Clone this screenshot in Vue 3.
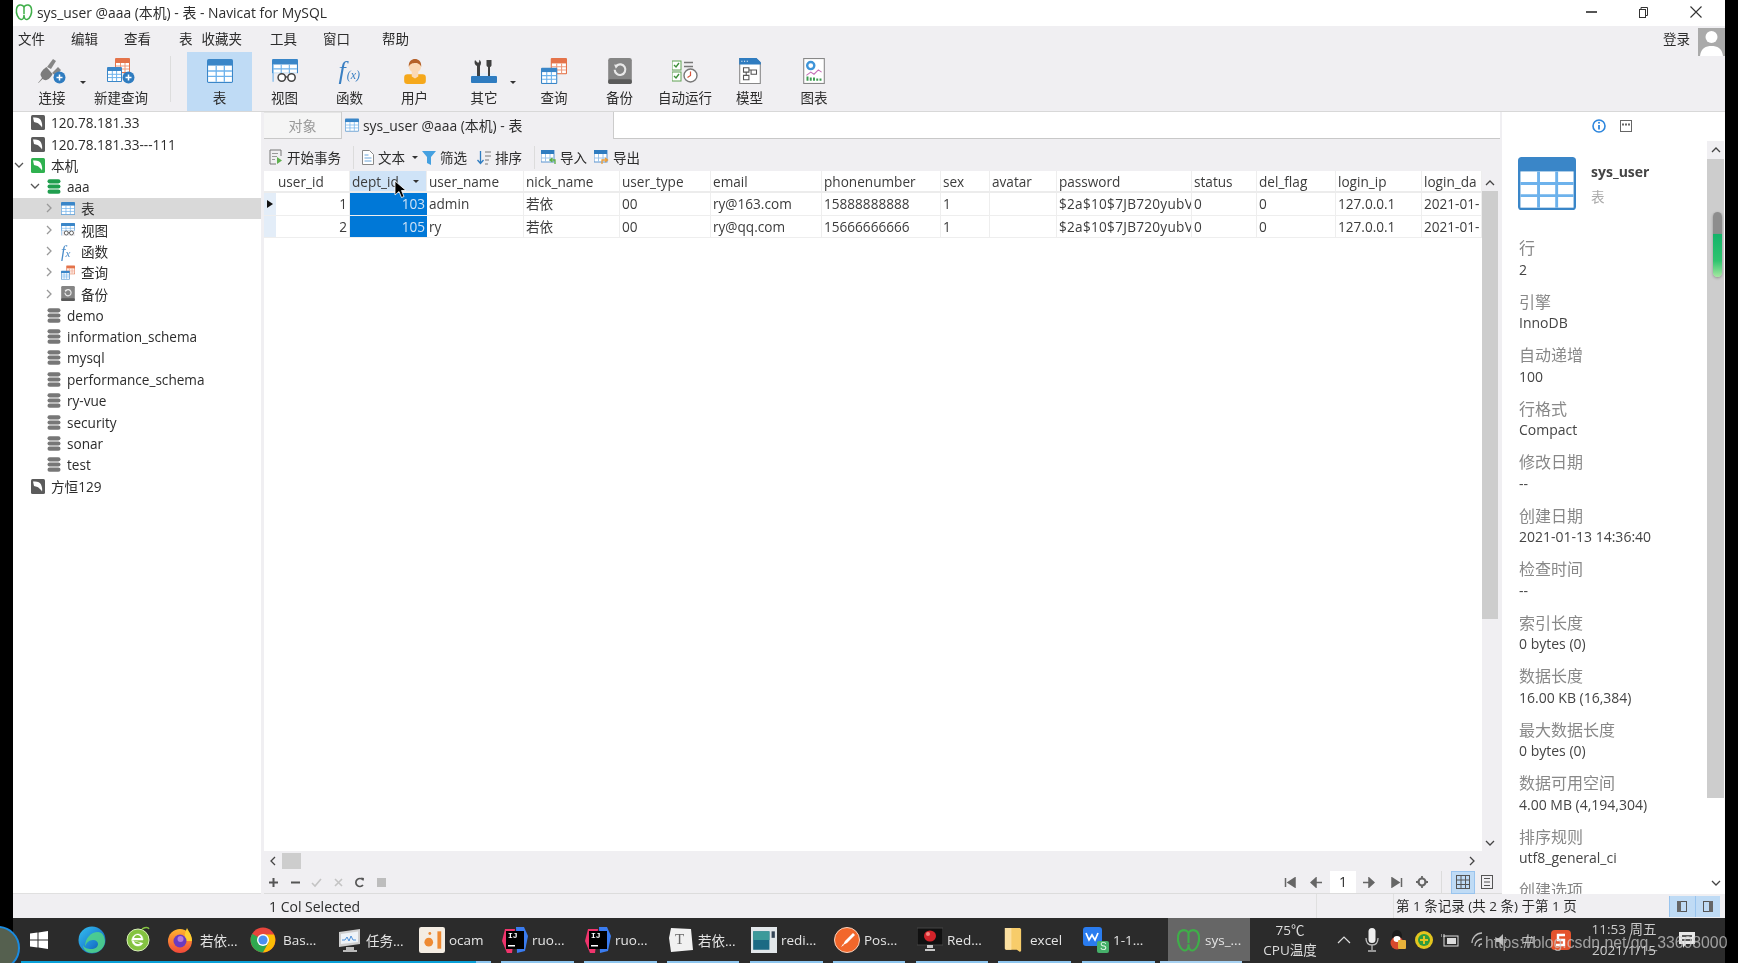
<script setup>
const menus = [
  { t: '文件', l: 18 }, { t: '编辑', l: 26 }, { t: '查看', l: 26 }, { t: '表', l: 28 }, { t: '收藏夹', l: 9 },
  { t: '工具', l: 28 }, { t: '窗口', l: 26 }, { t: '帮助', l: 32 },
]
const tools1 = [
  { t: '连接', i: 'plug', w: 78, drop: true },
  { t: '新建查询', i: 'newq', w: 60 },
]
const tools2 = [
  { t: '表', i: 'tbl', w: 65, on: true },
  { t: '视图', i: 'view', w: 65 },
  { t: '函数', i: 'func', w: 65 },
  { t: '用户', i: 'user', w: 65 },
  { t: '其它', i: 'tools', w: 74, drop: true },
  { t: '查询', i: 'query', w: 66 },
  { t: '备份', i: 'backup', w: 65 },
  { t: '自动运行', i: 'auto', w: 66 },
  { t: '模型', i: 'model', w: 63 },
  { t: '图表', i: 'chart', w: 66 },
]
const tree = [
  { t: '120.78.181.33', i: 'conn', lv: 0 },
  { t: '120.78.181.33---111', i: 'conn', lv: 0 },
  { t: '本机', i: 'conng', lv: 0, c: 'd' },
  { t: 'aaa', i: 'dbg', lv: 1, c: 'd' },
  { t: '表', i: 'tbl', lv: 2, c: 'r', sel: true },
  { t: '视图', i: 'view', lv: 2, c: 'r' },
  { t: '函数', i: 'fx', lv: 2, c: 'r' },
  { t: '查询', i: 'query', lv: 2, c: 'r' },
  { t: '备份', i: 'backup', lv: 2, c: 'r' },
  { t: 'demo', i: 'db', lv: 1 },
  { t: 'information_schema', i: 'db', lv: 1 },
  { t: 'mysql', i: 'db', lv: 1 },
  { t: 'performance_schema', i: 'db', lv: 1 },
  { t: 'ry-vue', i: 'db', lv: 1 },
  { t: 'security', i: 'db', lv: 1 },
  { t: 'sonar', i: 'db', lv: 1 },
  { t: 'test', i: 'db', lv: 1 },
  { t: '方恒129', i: 'conn', lv: 0 },
]
const cols = [
  { n: 'user_id', w: 74 }, { n: 'dept_id', w: 77 }, { n: 'user_name', w: 97 }, { n: 'nick_name', w: 96 },
  { n: 'user_type', w: 91 }, { n: 'email', w: 111 }, { n: 'phonenumber', w: 119 }, { n: 'sex', w: 49 },
  { n: 'avatar', w: 67 }, { n: 'password', w: 135 }, { n: 'status', w: 65 }, { n: 'del_flag', w: 79 },
  { n: 'login_ip', w: 86 }, { n: 'login_da', w: 60 },
]
const gridCols = '12px ' + cols.map(c => c.w + 'px').join(' ')
const rows = [
  ['1', '103', 'admin', '若依', '00', 'ry@163.com', '15888888888', '1', '', '$2a$10$7JB720yubV', '0', '0', '127.0.0.1', '2021-01-'],
  ['2', '105', 'ry', '若依', '00', 'ry@qq.com', '15666666666', '1', '', '$2a$10$7JB720yubV', '0', '0', '127.0.0.1', '2021-01-'],
]
const info = [
  ['行', '2'], ['引擎', 'InnoDB'], ['自动递增', '100'], ['行格式', 'Compact'], ['修改日期', '--'],
  ['创建日期', '2021-01-13 14:36:40'], ['检查时间', '--'], ['索引长度', '0 bytes (0)'],
  ['数据长度', '16.00 KB (16,384)'], ['最大数据长度', '0 bytes (0)'], ['数据可用空间', '4.00 MB (4,194,304)'],
  ['排序规则', 'utf8_general_ci'], ['创建选项', ''],
]
const apps = [
  { t: '若依...', i: 'firefox', s: 'f' }, { t: 'Bas...', i: 'chrome', s: 'f' }, { t: '任务...', i: 'taskmgr' }, { t: 'ocam', i: 'ocam' },
  { t: 'ruo...', i: 'idea', g: 'IJ' }, { t: 'ruo...', i: 'idea', g: 'IJ' }, { t: '若依...', i: 'typora', g: 'T' }, { t: 'redi...', i: 'redi' },
  { t: 'Pos...', i: 'postman' }, { t: 'Red...', i: 'redis' }, { t: 'excel', i: 'folder' }, { t: '1-1...', i: 'wps', g: 'S' },
]
const strip = [
  { w: 8, c: 'n' }, { w: 455, c: 'a' }, { w: 15, c: 'b' }, { w: 10, c: 'n' }, { w: 73, c: 'b' }, { w: 10, c: 'n' }, { w: 73, c: 'b' },
  { w: 10, c: 'n' }, { w: 72, c: 'b' }, { w: 11, c: 'n' }, { w: 73, c: 'b' }, { w: 10, c: 'n' }, { w: 72, c: 'b' },
  { w: 11, c: 'n' }, { w: 72, c: 'b' }, { w: 10, c: 'n' }, { w: 73, c: 'b' }, { w: 11, c: 'n' }, { w: 73, c: 'b' },
  { w: 5, c: 'n' }, { w: 82, c: 'c' },
]
</script>

<template>
  <div class="app">
    <svg class="defs" width="0" height="0">
      <defs>
        <linearGradient id="edgeg" x1="0" y1="0" x2="1" y2="1"><stop offset="0" stop-color="#35c1f1" /><stop offset=".6" stop-color="#1b7fd0" /><stop offset="1" stop-color="#114a9a" /></linearGradient>
        <linearGradient id="ffg" x1="0" y1="0" x2="0" y2="1"><stop offset="0" stop-color="#ffb52e" /><stop offset="1" stop-color="#f2483a" /></linearGradient>
      </defs>
      <symbol id="tbl" viewBox="0 0 24 22"><rect width="24" height="22" rx="1.5" fill="#3a86c8" /><rect x="1" y="6" width="22" height="15" fill="#fff" /><path d="M1 11H23M1 16H23M8.5 6V21M16 6V21" stroke="#6db2ec" stroke-width="1.2" /></symbol>
      <symbol id="view" viewBox="0 0 24 22"><rect width="24" height="16" rx="1" fill="#3a86c8" /><rect x="1" y="5" width="22" height="11" fill="#fff" /><path d="M1 9H23M1 13H23M8.5 5V16M16 5V16" stroke="#6db2ec" /><rect x="0" y="13" width="24" height="9" fill="#f0eff2" /><path d="M1 5V21" stroke="#6db2ec" /><circle cx="9" cy="17" r="3.4" fill="#fff" stroke="#444" stroke-width="1.4" /><circle cx="18" cy="17" r="3.4" fill="#fff" stroke="#444" stroke-width="1.4" /><path d="M12.4 16.5h2.2" stroke="#444" stroke-width="1.3" /></symbol>
      <symbol id="user" viewBox="0 0 24 24"><rect x="2" y="15" width="20" height="9" rx="3" fill="#f5a81c" /><path d="M9 13h6v4l-3 2-3-2z" fill="#fbd9b5" /><circle cx="12" cy="8" r="5.6" fill="#fbd9b5" /><path d="M6.2 8C6 3 9 1 12 1s6 2 5.8 7C16.5 5 14 4.5 12 4.5S7.5 5 6.2 8z" fill="#b5622a" /></symbol>
      <symbol id="tools" viewBox="0 0 26 24"><path d="M2 14h22l2 8v2H0v-2z" fill="#e4effa" /><rect y="17" width="26" height="7" rx="1" fill="#2f7cc0" /><path d="M6 17V7C3.6 6 3 3 4 1l2.4 2.5L8 3.4l.3-2.6C10.3 2 10.6 5 9 7v10z" fill="#404040" /><path d="M17 17V8c-1-.2-1.5-1-1.5-2V1h5v5c0 1-.5 1.8-1.5 2v9z" fill="#404040" /></symbol>
      <symbol id="query" viewBox="0 0 24 24"><rect x="9" y="0" width="15" height="15" rx="1" fill="#e4734a" /><rect x="10" y="5" width="13" height="9" fill="#fff" /><path d="M10 8h13M10 11h13M14.5 5v9M19 5v9" stroke="#ee9a7c" /><rect x="0" y="9" width="15" height="15" rx="1" fill="#3a86c8" /><rect x="1" y="13" width="13" height="10" fill="#fff" /><path d="M1 16.3h13M1 19.6h13M5.3 13v10M9.6 13v10" stroke="#6db2ec" /></symbol>
      <symbol id="newq" viewBox="0 0 28 26"><rect x="8" y="0" width="15" height="15" rx="1" fill="#e4734a" /><rect x="9" y="5" width="13" height="9" fill="#fff" /><path d="M9 8h13M9 11h13M13.5 5v9M18 5v9" stroke="#ee9a7c" /><rect x="0" y="9" width="15" height="15" rx="1" fill="#3a86c8" /><rect x="1" y="13" width="13" height="10" fill="#fff" /><path d="M1 16.3h13M1 19.6h13M5.3 13v10M9.6 13v10" stroke="#6db2ec" /><circle cx="21.5" cy="19.5" r="6" fill="#2f7cc0" /><path d="M18.5 19.5h6M21.5 16.5v6" stroke="#fff" stroke-width="1.5" /></symbol>
      <symbol id="plug" viewBox="0 0 28 26"><path d="M0 25l4-5-1.500-3c0-3 3-6 6-8l6 7c-1 3-5 7-8 6l-2-1-4 4z" fill="#7c7c7c" /><path d="M9 9l6-8 3 2-5 8zM14 15l6-6 3 3-5 6z" fill="#868686" /><circle cx="21.5" cy="19.5" r="6" fill="#2f7cc0" /><path d="M18.5 19.5h6M21.5 16.5v6" stroke="#fff" stroke-width="1.5" /></symbol>
      <symbol id="backup" viewBox="0 0 20 22"><rect width="20" height="22" rx="2" fill="#858585" /><rect y="18" width="20" height="4" rx="1.5" fill="#5a5a5a" /><path d="M7 6.5a4.5 4.5 0 1 1-1.5 3.5" fill="none" stroke="#e8e8e8" stroke-width="1.8" /><path d="M5 5.5l4 .5-2.5 3z" fill="#e8e8e8" /></symbol>
      <symbol id="auto" viewBox="0 0 26 24"><rect x="0" y="2" width="9" height="9" fill="#fff" stroke="#5fa253" /><path d="M2 6l2 2 3-4" fill="none" stroke="#3e8f3a" stroke-width="1.4" /><rect x="0" y="13" width="9" height="9" fill="#fff" stroke="#5fa253" /><path d="M2 17l2 2 3-4" fill="none" stroke="#3e8f3a" stroke-width="1.4" /><path d="M12 3.5h9M12 7.5h9" stroke="#777" stroke-width="1.5" /><circle cx="18.5" cy="16.5" r="6.5" fill="#fff" stroke="#777" stroke-width="1.4" /><path d="M18.5 12.5v4l-3 2" fill="none" stroke="#d8553c" stroke-width="1.2" /></symbol>
      <symbol id="model" viewBox="0 0 20 24"><path d="M.5.5h15l4 4v19H.5z" fill="#fff" stroke="#888" /><path d="M0 0h16l4 4v2H0z" fill="#2f7cc0" /><path d="M2 3h1M4.5 3h1M7 3h1" stroke="#fff" /><path d="M4 9h5v4H4zM11 11h5v4h-5zM4 16h5v4H4zM6.5 13v3M9 11h2" fill="none" stroke="#555" /></symbol>
      <symbol id="chart" viewBox="0 0 20 24"><rect x=".5" y=".5" width="19" height="23" fill="#fff" stroke="#888" /><circle cx="7" cy="7" r="3.3" fill="none" stroke="#3e94d8" stroke-width="2.2" /><path d="M3 16l4-3 3 2 4-4 3 2" fill="none" stroke="#c56fb8" /><path d="M4 17v4M7 18v3M10 18v3M13 19v2M16 19v2" stroke="#3b9c50" stroke-width="1.8" /></symbol>
      <symbol id="conn" viewBox="0 0 14 15"><rect width="14" height="15" rx="1.5" fill="#5b5b5b" /><path d="M2 2.5c4-.5 7 .5 8 3 1 2 1.5 5 1 7-1-2-3-3.5-4.5-4.5L3 7z" fill="#fff" /></symbol>
      <symbol id="conng" viewBox="0 0 14 15"><rect width="14" height="15" rx="1.5" fill="#2fb14f" /><path d="M2 2.5c4-.5 7 .5 8 3 1 2 1.5 5 1 7-1-2-3-3.5-4.5-4.5L3 7z" fill="#fff" /></symbol>
      <symbol id="db" viewBox="0 0 13 15"><rect width="13" height="4.2" y=".2" rx="2.1" fill="#777" /><rect width="13" height="4.2" y="5.4" rx="2.1" fill="#777" /><rect width="13" height="4.2" y="10.6" rx="2.1" fill="#777" /></symbol>
      <symbol id="dbg" viewBox="0 0 13 15"><rect width="13" height="4.2" y=".2" rx="2.1" fill="#1f9e4e" /><rect width="13" height="4.2" y="5.4" rx="2.1" fill="#1f9e4e" /><rect width="13" height="4.2" y="10.6" rx="2.1" fill="#1f9e4e" /></symbol>
      <symbol id="navicat" viewBox="0 0 24 24"><path d="M12 5C9 1 3 2 2 8c-1 6 2 13 6 14 3 .5 4-3 4-6 0 3 1 6.5 4 6 4-1 7-8 6-14-1-6-7-7-10-3z" fill="none" stroke="#3fae49" stroke-width="2" /><path d="M12 5v10" stroke="#3fae49" stroke-width="2" /></symbol>
      <symbol id="firefox" viewBox="0 0 26 26"><circle cx="13" cy="14" r="12" fill="url(#ffg)" /><path d="M20 1c2 4 5 7 5 13h-7c-1-5 0-9 2-13z" fill="#ffcf30" /><circle cx="13" cy="14" r="6.5" fill="#6a3bc0" /><circle cx="13.5" cy="12" r="3" fill="#b77bd8" /></symbol>
      <symbol id="chrome" viewBox="0 0 26 26"><circle cx="13" cy="13" r="12.5" fill="#e8453c" /><path d="M13 13L2.2 6.8A12.5 12.5 0 0 0 13 25.5l6.5-11z" fill="#2fa84f" /><path d="M13 7.5h11A12.5 12.5 0 0 1 13 25.5l5.5-10z" fill="#fbbc05" /><circle cx="13" cy="13" r="6" fill="#fff" /><circle cx="13" cy="13" r="4.6" fill="#4a8ff0" /></symbol>
      <symbol id="taskmgr" viewBox="0 0 26 24"><path d="M3 4l21-3v15L3 19z" fill="#cfcfcf" /><path d="M5 6l17-2.5v10.500L5 16z" fill="#eef3f8" /><path d="M6 12l3 0 2-3 2 4 2-5 2 4h3" fill="none" stroke="#4d90d9" /><path d="M10 19h8v3h3v2H7v-2h3z" fill="#bbb" /></symbol>
      <symbol id="ocam" viewBox="0 0 24 24"><rect width="24" height="24" rx="2" fill="#f4ede3" /><circle cx="9" cy="14" r="4" fill="#ee8a32" /><rect x="17" y="4" width="3.5" height="16" fill="#ee8a32" /><circle cx="10" cy="6" r="1.3" fill="#ee8a32" /></symbol>
      <symbol id="idea" viewBox="0 0 26 26"><path d="M3 2h10l-3 24H5L0 14z" fill="#f0346c" /><path d="M14 0h8l4 9-3 15-8 2z" fill="#3a7cf0" /><rect x="4" y="4" width="18" height="18" fill="#000" /><rect x="6" y="18" width="7" height="1.5" fill="#fff" /></symbol>
      <symbol id="typora" viewBox="0 0 26 26"><path d="M3 1l20 1 2 21-22 2-2-14z" fill="#f1f1f1" /></symbol>
      <symbol id="redi" viewBox="0 0 24 24"><rect width="24" height="24" fill="#e2e7ea" /><rect x="2" y="4" width="15" height="17" fill="#1c6a84" /><rect x="2" y="4" width="15" height="8" fill="#3c9a9a" /><rect x="19" y="4" width="3" height="6" fill="#345" /></symbol>
      <symbol id="postman" viewBox="0 0 26 26"><circle cx="13" cy="13" r="12.5" fill="#f2672b" stroke="#fbd3bd" /><path d="M19 6l2 2-8 8-4 2 2-4z" fill="#fff" /><path d="M7 20l2-3 1 1z" fill="#fff" /></symbol>
      <symbol id="redis" viewBox="0 0 26 24"><rect width="26" height="17" fill="#111" stroke="#444" /><ellipse cx="13" cy="8" rx="6" ry="5.5" fill="#d2232a" /><circle cx="11" cy="6" r="2" fill="#f4857f" /><path d="M10 17h6v3h-6zM8 21h10v2H8z" fill="#c8c8c8" /></symbol>
      <symbol id="folder" viewBox="0 0 17 24"><path d="M1 1h14l1 1v20l-1 1-3-2H2l-1-1z" fill="#f7cc6a" /><path d="M1 1h6v20H2l-1-1z" fill="#fbe0a1" /></symbol>
      <symbol id="wps" viewBox="0 0 26 26"><rect width="19" height="19" rx="3" fill="#2a7cef" /><path d="M3 6l3 7 3-5 3 5 3-7" fill="none" stroke="#fff" stroke-width="1.7" /><rect x="14" y="14" width="12" height="12" rx="2" fill="#46b06a" /></symbol>
    </svg>

    <div class="win">
      <header class="title">
        <svg class="t-ic" width="18" height="18"><use href="#navicat" /></svg>
        <span class="t-txt">sys_user @aaa (本机) - 表 - Navicat for MySQL</span>
        <div class="wctl">
          <span class="wmin"></span>
          <svg class="wmax" width="11" height="11" viewBox="0 0 11 11"><path d="M3 2.5V.5h6.500v8H7.500" fill="none" stroke="#333" /><rect x="1.500" y="2.500" width="6" height="8" fill="none" stroke="#333" /></svg>
          <svg class="wx" width="12" height="12" viewBox="0 0 12 12"><path d="M.5.5l11 11M11.5.5l-11 11" stroke="#333" stroke-width="1.1" /></svg>
        </div>
      </header>

      <nav class="menu">
        <span v-for="m in menus" :key="m.t" class="mi" :style="{ marginLeft: m.l + 'px' }">{{ m.t }}</span>
        <span class="login">登录</span>
        <div class="avatar">
          <svg width="27" height="28" viewBox="0 0 27 28"><circle cx="13.5" cy="9" r="6" fill="#fff" /><path d="M2 28c1-8 6-10 11.5-10S24 20 25 28z" fill="#fff" /></svg>
        </div>
      </nav>

      <div class="toolbar">
        <div v-for="b in tools1" :key="b.t" class="tb" :style="{ width: b.w + 'px' }">
          <svg class="tb-ic" width="28" height="26"><use :href="'#' + b.i" /></svg>
          <span class="tb-l">{{ b.t }}</span>
          <i v-if="b.drop" class="drop"></i>
        </div>
        <div class="tb-sep"></div>
        <div v-for="b in tools2" :key="b.t" class="tb" :class="{ on: b.on }" :style="{ width: b.w + 'px' }">
          <span v-if="b.i === 'func'" class="fxb"><em>f</em><em class="fxs">(x)</em></span>
          <svg v-else class="tb-ic" width="26" height="26"><use :href="'#' + b.i" /></svg>
          <span class="tb-l">{{ b.t }}</span>
          <i v-if="b.drop" class="drop"></i>
        </div>
      </div>

      <main class="body">
        <aside class="tree">
          <div v-for="n in tree" :key="n.t + n.lv" class="node" :class="['lv' + n.lv, { sel: n.sel }]">
            <span class="caret">
              <svg v-if="n.c === 'd'" width="10" height="7" viewBox="0 0 10 7"><path d="M1 1l4 4 4-4" fill="none" stroke="#555" stroke-width="1.3" /></svg>
              <svg v-if="n.c === 'r'" width="7" height="10" viewBox="0 0 7 10"><path d="M1 1l4 4-4 4" fill="none" stroke="#999" stroke-width="1.3" /></svg>
            </span>
            <span v-if="n.i === 'fx'" class="fxt"><em>f</em><em class="fxts">x</em></span>
            <svg v-else class="n-ic" width="14" height="15"><use :href="'#' + n.i" /></svg>
            <span class="n-t">{{ n.t }}</span>
          </div>
        </aside>

        <section class="center">
          <div class="tabs">
            <div class="tab obj">对象</div>
            <div class="tab act">
              <svg width="14" height="14"><use href="#tbl" /></svg>
              <span>sys_user @aaa (本机) - 表</span>
            </div>
            <div class="tab-rest"></div>
          </div>

          <div class="tb2">
            <span class="t2"><svg width="14" height="16" viewBox="0 0 14 16"><path d="M1 1h11v6M1 1v14h6" fill="none" stroke="#777" /><path d="M3 4.5h6M3 7.5h5M3 10.5h3" stroke="#999" /><path d="M8 8l5 3.5L8 15z" fill="#5fb04f" /></svg>开始事务</span>
            <i class="vs s1"></i>
            <span class="t2"><svg width="12" height="15" viewBox="0 0 12 15"><path d="M.5.5h7l4 4v10H.5z" fill="#fff" stroke="#888" /><path d="M2.5 5h4M2.5 8h7M2.5 11h7" stroke="#6ba5da" /></svg>文本<i class="drop small"></i></span>
            <span class="t2 filt"><svg width="14" height="15" viewBox="0 0 14 15"><path d="M0 1h14L9 7v8l-4-2V7z" fill="#45a0e0" /></svg>筛选</span>
            <span class="t2 srt"><svg width="14" height="15" viewBox="0 0 14 15"><path d="M3.5 1v12M.5 10l3 3.5 3-3.5" fill="none" stroke="#2f7cc0" stroke-width="1.3" /><path d="M8 2h6M8 6h6M8 10h4M8 14h3" stroke="#777" /></svg>排序</span>
            <i class="vs s2"></i>
            <span class="t2"><svg width="15" height="15" viewBox="0 0 15 15"><rect width="13" height="12" fill="#fff" stroke="#5a94cf" /><rect width="13" height="4" fill="#2f7cc0" /><path d="M0 8h13M4.5 4v8M9 4v8" stroke="#9cc4ea" /><path d="M14 14V10H9.5M11.5 8l-2.5 2 2.5 2" fill="none" stroke="#5cae48" stroke-width="1.3" /></svg>导入</span>
            <span class="t2 exp"><svg width="15" height="15" viewBox="0 0 15 15"><rect width="13" height="12" fill="#fff" stroke="#5a94cf" /><rect width="13" height="4" fill="#2f7cc0" /><path d="M0 8h13M4.5 4v8M9 4v8" stroke="#9cc4ea" /><path d="M8 14v-4h5M11 8l2.5 2-2.5 2" fill="none" stroke="#ea9c38" stroke-width="1.3" /></svg>导出</span>
          </div>

          <div class="gridwrap">
            <div class="grid">
              <div class="ghead" :style="{ gridTemplateColumns: gridCols }">
                <div class="gi"></div>
                <div v-for="(c, i) in cols" :key="c.n" class="hc" :class="{ hsel: i === 1 }">
                  {{ c.n }}<i v-if="i === 1" class="drop sort"></i>
                </div>
              </div>
              <div v-for="(r, ri) in rows" :key="ri" class="grow" :style="{ gridTemplateColumns: gridCols }">
                <div class="gi"><i v-if="ri === 0" class="ptr"></i></div>
                <div v-for="(v, i) in r" :key="i" class="gc" :class="{ num: i < 2, csel: i === 1, pw: i === 9 }">{{ v }}</div>
              </div>
              <svg class="cursor" width="14" height="19" viewBox="0 0 14 19"><path d="M1 1v14l4-3.5 2.500 6 2.500-1-2.500-6H12z" fill="#000" stroke="#fff" stroke-width=".8" /></svg>
            </div>
            <div class="vbar">
              <svg class="arr" width="10" height="6" viewBox="0 0 10 6"><path d="M1 5l4-4 4 4" fill="none" stroke="#444" stroke-width="1.3" /></svg>
              <div class="vthumb"></div>
              <div class="vspace"></div>
              <svg class="arr" width="10" height="6" viewBox="0 0 10 6"><path d="M1 1l4 4 4-4" fill="none" stroke="#444" stroke-width="1.3" /></svg>
            </div>
          </div>

          <div class="hbar">
            <svg width="6" height="10" viewBox="0 0 6 10"><path d="M5 1L1 5l4 4" fill="none" stroke="#444" stroke-width="1.3" /></svg>
            <div class="hthumb"></div>
            <svg class="hr" width="6" height="10" viewBox="0 0 6 10"><path d="M1 1l4 4-4 4" fill="none" stroke="#444" stroke-width="1.3" /></svg>
          </div>

          <div class="bbar">
            <div class="bl">
              <svg width="11" height="11" viewBox="0 0 11 11"><path d="M5.5 1v9M1 5.5h9" stroke="#555" stroke-width="2" /></svg>
              <svg width="11" height="11" viewBox="0 0 11 11"><path d="M1 5.5h9" stroke="#555" stroke-width="2" /></svg>
              <svg width="11" height="11" viewBox="0 0 11 11"><path d="M1 6l3 3 6-7" fill="none" stroke="#c4c4c4" stroke-width="1.6" /></svg>
              <svg width="11" height="11" viewBox="0 0 11 11"><path d="M2 2l7 7M9 2l-7 7" stroke="#c4c4c4" stroke-width="1.6" /></svg>
              <svg width="11" height="11" viewBox="0 0 11 11"><path d="M9 3a4 4 0 1 0 0 5" fill="none" stroke="#555" stroke-width="1.7" /><path d="M7 .5l3 .5-.5 3z" fill="#555" /></svg>
              <svg width="11" height="11" viewBox="0 0 11 11"><rect x="1" y="1" width="9" height="9" fill="#bdbdbd" /></svg>
            </div>
            <div class="br">
              <svg width="12" height="11" viewBox="0 0 12 11"><path d="M1.5 1v9M11 1L4 5.5 11 10z" stroke="#666" stroke-width="1.5" fill="#666" /></svg>
              <svg class="m1" width="12" height="11" viewBox="0 0 12 11"><path d="M6 1L1 5.5 6 10zM5 5.5h7" stroke="#666" stroke-width="1.5" fill="#666" /></svg>
              <span class="pg">1</span>
              <svg class="m2" width="12" height="11" viewBox="0 0 12 11"><path d="M6 1l5 4.5L6 10zM0 5.5h7" stroke="#666" stroke-width="1.5" fill="#666" /></svg>
              <svg class="m3" width="12" height="11" viewBox="0 0 12 11"><path d="M10.5 1v9M1 1l7 4.5L1 10z" stroke="#666" stroke-width="1.5" fill="#666" /></svg>
              <svg class="m4" width="12" height="12" viewBox="0 0 12 12"><circle cx="6" cy="6" r="3.5" fill="none" stroke="#666" stroke-width="2.2" /><path d="M6 0v2M6 10v2M0 6h2M10 6h2" stroke="#666" stroke-width="1.8" /></svg>
              <i class="vs s3"></i>
              <span class="vbtn on"><svg width="14" height="14" viewBox="0 0 14 14"><rect x=".5" y=".5" width="13" height="13" fill="none" stroke="#555" /><path d="M0 5h14M0 9.5h14M5 0v14M9.5 0v14" stroke="#555" /></svg></span>
              <span class="vbtn"><svg width="12" height="14" viewBox="0 0 12 14"><rect x=".5" y=".5" width="11" height="13" fill="none" stroke="#555" /><path d="M3 3.5h6M3 7h6M3 10.5h6" stroke="#555" /></svg></span>
            </div>
          </div>
        </section>

        <aside class="panel">
          <div class="p-top">
            <svg width="14" height="14" viewBox="0 0 14 14"><circle cx="7" cy="7" r="6" fill="#fff" stroke="#2d86dd" stroke-width="1.6" /><path d="M7 6v4.5" stroke="#2d86dd" stroke-width="1.8" /><circle cx="7" cy="3.8" r="1" fill="#2d86dd" /></svg>
            <svg class="ddl" width="12" height="12" viewBox="0 0 12 12"><rect x=".5" y=".5" width="11" height="11" fill="#fff" stroke="#666" /><path d="M2 4.5h8" stroke="#666" stroke-width="1.8" stroke-dasharray="2 1" /></svg>
          </div>
          <div class="p-main">
            <div class="p-body">
              <div class="p-head">
                <svg width="58" height="55" viewBox="0 0 58 55"><use href="#tbl" width="58" height="55" /></svg>
                <div class="p-name"><b>sys_user</b><span>表</span></div>
              </div>
              <div v-for="it in info" :key="it[0]" class="p-item">
                <div class="p-lab">{{ it[0] }}</div>
                <div class="p-val">{{ it[1] }}</div>
              </div>
            </div>
            <div class="p-bar">
              <div class="p-arr"><svg width="10" height="6" viewBox="0 0 10 6"><path d="M1 5l4-4 4 4" fill="none" stroke="#444" stroke-width="1.3" /></svg></div>
              <div class="p-thumb"></div>
              <div class="p-arr"><svg width="10" height="6" viewBox="0 0 10 6"><path d="M1 1l4 4 4-4" fill="none" stroke="#444" stroke-width="1.3" /></svg></div>
            </div>
          </div>
          <div class="volpill"></div>
        </aside>
      </main>

      <footer class="status">
        <span class="st1">1 Col Selected</span>
        <i class="st2"></i>
        <span class="st3">第 1 条记录 (共 2 条) 于第 1 页</span>
        <span class="stb"><svg width="10" height="11" viewBox="0 0 10 11"><rect x=".5" y=".5" width="9" height="10" fill="none" stroke="#555" /><rect width="4" height="11" fill="#666" /></svg></span>
        <span class="stb"><svg width="10" height="11" viewBox="0 0 10 11"><rect x=".5" y=".5" width="9" height="10" fill="none" stroke="#555" /><rect x="6" width="4" height="11" fill="#666" /></svg></span>
      </footer>

      <div class="taskbar">
        <div class="tb-row">
          <svg class="winlogo" width="18" height="18" viewBox="0 0 18 18"><path d="M0 2.5l7.500-1V8.500H0zM8.500 1.400L18 0v8.500H8.500zM0 9.500h7.500v7L0 15.500zM8.500 9.500H18V18l-9.500-1.400z" fill="#fff" /></svg>
          <svg class="pin e1" width="28" height="28" viewBox="0 0 28 28"><circle cx="14" cy="14" r="13.5" fill="url(#edgeg)" /><path d="M27 16c-1 8-8 11-13 11-6 0-9-4-9-8 1 3 5 4 8 4 4 0 7-2 7-5 0-2-2-4-5-4-4 0-7 3-8 7 0-9 6-15 13-15 4 0 7 4 7 10z" fill="#4fd18a" opacity=".9" /></svg>
          <svg class="pin e2" width="24" height="26" viewBox="0 0 24 26"><circle cx="12" cy="14" r="11" fill="#84c341" stroke="#d9efb9" /><path d="M5 14h12c0-4-2.5-6-5-6s-6 2-6 6 3 6 6 6c2 0 4-1 5-3" fill="#fff" stroke="#fff" stroke-width=".5" /><path d="M8 12h7c-.5-2-2-3-3.5-3S8.5 10 8 12zM8 15c.5 2 2 3 4 3 1 0 2-.5 2.5-1" fill="#84c341" /><path d="M16 3c4-2 6-2 7 0" fill="none" stroke="#84c341" stroke-width="1.5" /></svg>
          <div class="apps">
            <div v-for="(a, i) in apps" :key="i" class="app-slot" :class="{ left: a.s }">
              <span class="app-w">
                <svg class="app-ic" width="26" height="26"><use :href="'#' + a.i" /></svg>
                <span v-if="a.g" class="gl" :class="'g-' + a.i">{{ a.g }}</span>
              </span>
              <span class="app-l">{{ a.t }}</span>
            </div>
            <div class="app-cur">
              <svg class="app-ic" width="25" height="26"><use href="#navicat" /></svg>
              <span class="app-l">sys_...</span>
            </div>
          </div>
          <div class="temp"><span>75℃</span><span>CPU温度</span></div>
          <div class="tray">
            <svg class="y1" width="14" height="8" viewBox="0 0 14 8"><path d="M1 7l6-6 6 6" fill="none" stroke="#ddd" stroke-width="1.2" /></svg>
            <svg class="y2" width="14" height="24" viewBox="0 0 14 24"><rect x="3.5" width="7" height="15" rx="3.5" fill="#eee" /><path d="M1 10c0 5 3 7 6 7s6-2 6-7M7 17v5M3 23h8" fill="none" stroke="#bbb" stroke-width="1.3" /></svg>
            <svg class="y3" width="18" height="22" viewBox="0 0 18 22"><ellipse cx="8" cy="7" rx="5" ry="6" fill="#1b1b1b" /><ellipse cx="8" cy="14" rx="6.5" ry="6.5" fill="#d84a2c" /><ellipse cx="8" cy="10" rx="3.5" ry="3" fill="#fff" /><rect x="9" y="11" width="8" height="9" rx="1" fill="#e8b23a" /></svg>
            <svg class="y4" width="18" height="18" viewBox="0 0 18 18"><circle cx="9" cy="9" r="9" fill="#e3c51f" /><circle cx="9" cy="9" r="6" fill="#2e9b3e" /><path d="M9 5v8M5 9h8" stroke="#e3c51f" stroke-width="2" /></svg>
            <svg class="y5" width="18" height="14" viewBox="0 0 18 14"><rect x="3" y="3" width="14" height="10" fill="none" stroke="#ddd" /><rect x="6" y="5" width="9" height="6" fill="#ddd" /><path d="M0 1v3M3 1v3" stroke="#ddd" /></svg>
            <svg class="y6" width="22" height="16" viewBox="0 0 22 16"><path d="M1 11a10 10 0 0 1 10-10M4 14a7 7 0 0 1 7-7M8 15a3 3 0 0 1 3-3" fill="none" stroke="#bbb" stroke-width="1.3" /></svg>
            <svg class="y9" width="14" height="14" viewBox="0 0 14 14"><path d="M1 5h3l4-4v12l-4-4H1z" fill="#bbb" /><path d="M10 4c1.5 2 1.5 4 0 6" fill="none" stroke="#bbb" /></svg>
            <span class="y7">中</span>
            <svg class="y8" width="20" height="20" viewBox="0 0 20 20"><rect width="20" height="20" rx="4" fill="#e4532c" /><path d="M14 5H7v5h6v5H5" fill="none" stroke="#fff" stroke-width="2.4" /></svg>
          </div>
          <div class="clock"><span>11:53 周五</span><span>2021/1/15</span></div>
          <svg class="notif" width="18" height="18" viewBox="0 0 18 18"><path d="M1 1h16v12H8l-3 4v-4H1z" fill="#e8e8e8" /><path d="M4 5h10M4 9h10" stroke="#2a2a2a" stroke-width="1.5" /></svg>
        </div>
        <div class="strip">
          <i v-for="(s, i) in strip" :key="i" :class="s.c" :style="{ width: s.w + 'px' }"></i>
        </div>
      </div>
    </div>

    <div class="photo"></div>
    <div class="mark">https://blog.csdn.net/qq_33608000</div>
  </div>
</template>

<style scoped>
.app {
  position: relative;
  width: 1738px;
  height: 963px;
  background: #000;
  overflow: hidden;
  font-family: "Open Sans", "Noto Sans CJK SC", sans-serif;
  font-size: 14px;
  color: #2c2c2c;
  filter: blur(0.35px);
}
.defs { position: absolute; }
.win {
  margin: 0 13px;
  width: 1712px;
  height: 963px;
  display: flex;
  flex-direction: column;
  background: #f0eff2;
}
.title {
  height: 26px;
  background: #fff;
  display: flex;
  align-items: center;
  padding-left: 2px;
  padding-bottom: 2px;
  box-sizing: border-box;
  flex: none;
}
.t-ic { margin-right: 4px; }
.t-txt { font-size: 13.9px; }
.wctl { margin-left: auto; display: flex; align-items: center; height: 24px; }
.wmin { width: 11px; height: 1.5px; background: #555; margin-right: 41px; }
.wmax { margin-right: 41px; }
.wx { margin-right: 23px; }

.menu {
  height: 26px;
  flex: none;
  display: flex;
  align-items: center;
  padding-bottom: 2px;
  box-sizing: border-box;
  font-size: 13.5px;
  margin-left: -13px;
}
.mi { white-space: nowrap; }
.login { margin-left: auto; margin-right: 8px; }
.avatar {
  width: 27px;
  height: 28px;
  background: #aaa;
  margin-top: 2px;
  align-self: flex-start;
}
.avatar svg { display: block; }

.toolbar {
  height: 60px;
  flex: none;
  display: flex;
  border-bottom: 1px solid #d8d8d8;
  font-size: 13.5px;
  box-sizing: border-box;
}
.tb {
  height: 59px;
  flex: none;
  display: flex;
  flex-direction: column;
  align-items: center;
  position: relative;
  padding-top: 6px;
  box-sizing: border-box;
}
.tb.on { background: #bfdbf5; }
.tb-ic { flex: none; }
.tb-l { margin-top: 4px; line-height: 20px; white-space: nowrap; }
.fxb { height: 26px; width: 26px; flex: none; display: flex; align-items: baseline; font-family: "Liberation Serif", serif; color: #3a7fc2; line-height: 26px; }
.fxb em { font-size: 26px; margin-left: 2px; }
.fxb .fxs { font-size: 12px; margin-left: 1px; }
.fxt { width: 14px; height: 15px; margin-right: 6px; flex: none; display: flex; align-items: baseline; font-family: "Liberation Serif", serif; color: #4a8cc9; line-height: 15px; }
.fxt em { font-size: 16px; }
.fxt .fxts { font-size: 11px; }
.drop {
  position: absolute;
  right: 5px;
  top: 29px;
  width: 0;
  height: 0;
  border: 3px solid transparent;
  border-top: 3.5px solid #333;
  border-bottom: 0;
}
.tb-sep { width: 1px; height: 46px; background: #ddd; margin: 4px 16px 0 19px; flex: none; }

.body {
  flex: 1;
  min-height: 0;
  display: grid;
  grid-template-columns: 248px 1241px 223px;
  background: #f0eff2;
}
.tree { background: #fff; overflow: hidden; border-bottom: 1px solid #e0e0e0; font-size: 13.6px; }
.node { height: 21.4px; display: flex; align-items: center; white-space: nowrap; }
.node.sel { background: #d9d9d9; }
.lv1 { padding-left: 16px; }
.lv2 { padding-left: 30px; }
.caret { width: 18px; flex: none; display: flex; justify-content: center; align-items: center; box-sizing: border-box; padding-right: 6px; }
.n-ic { flex: none; margin-right: 6px; }

.center { display: flex; flex-direction: column; padding-left: 3px; min-width: 0; }
.tabs { height: 27px; display: flex; flex: none; }
.tab { height: 27px; box-sizing: border-box; display: flex; align-items: center; padding-bottom: 2px; }
.obj {
  width: 77px;
  justify-content: center;
  background: #f5f5f5;
  color: #999;
  border-top: 1px solid #e4e4e4;
  border-bottom: 1px solid #c8c8c8;
}
.act { width: 273px; padding-left: 3px; gap: 4px; border-left: 1px solid #ccc; border-right: 1px solid #ccc; font-size: 13.9px; }
.tab-rest { flex: 1; background: #fff; border-bottom: 1px solid #c8c8c8; margin-right: 2px; }

.tb2 { height: 32px; flex: none; display: flex; align-items: center; padding-left: 5px; padding-top: 4px; box-sizing: border-box; font-size: 13.5px; }
.t2 { display: flex; align-items: center; gap: 4px; white-space: nowrap; }
.vs { width: 1px; height: 23px; background: #dcdcdc; flex: none; }
.s1 { margin: 0 8px 0 12px; }
.filt { margin-left: 4px; }
.srt { margin-left: 10px; }
.s2 { margin: 0 6px 0 12px; }
.exp { margin-left: 7px; }
.drop.small { position: static; margin: 0 0 0 3px; }

.gridwrap { flex: 1; min-height: 0; display: flex; }
.grid { width: 1218px; flex: none; background: #fff; overflow: hidden; position: relative; }
.ghead { display: grid; height: 22px; border-bottom: 2px solid #ececec; box-sizing: border-box; }
.grow { display: grid; height: 22.5px; border-bottom: 1px solid #eee; box-sizing: border-box; }
.gi { background: #e3edf8; display: flex; align-items: center; }
.ghead .gi { background: #fff; }
.ptr { width: 0; height: 0; border: 4.5px solid transparent; border-left: 6px solid #111; border-right: 0; margin-left: 3px; }
.hc { padding-left: 2px; line-height: 22px; color: #3c3c3c; border-right: 1px solid #eee; white-space: nowrap; overflow: hidden; position: relative; font-size: 13.6px; }
.hsel { background: #cfe3f7; }
.drop.sort { right: 7px; top: 9px; }
.gc { padding: 0 0 0 2px; line-height: 21.5px; color: #3c3c3c; border-right: 1px solid #eee; white-space: nowrap; overflow: hidden; font-size: 13.6px; }
.pw { letter-spacing: 0.28px; }
.num { text-align: right; padding-right: 2px; padding-left: 0; }
.csel { background: #0078d7; color: #cfe3f7; border-right: 0; }
.cursor { position: absolute; left: 130px; top: 9px; }
.vbar { width: 16px; margin-right: 4px; display: flex; flex-direction: column; align-items: center; flex: none; }
.arr { margin: 9px 0 5px; flex: none; }
.vbar .vthumb { width: 16px; height: 428px; background: #cdcdcd; flex: none; }
.vspace { flex: 1; }
.hbar { height: 20px; flex: none; display: flex; align-items: center; padding-left: 6px; }
.hthumb { width: 19px; height: 16px; background: #cdcdcd; margin-left: 6px; }
.hr { margin-left: 1168px; }
.bbar { height: 22px; flex: none; display: flex; align-items: center; padding-left: 4px; border-bottom: 1px solid #dcdcdc; box-sizing: content-box; }
.bl { display: flex; gap: 10.5px; }
.br { margin-left: auto; display: flex; align-items: center; margin-right: 3px; }
.m1 { margin-left: 14px; }
.pg { width: 26px; height: 22px; background: #fff; text-align: center; line-height: 22px; margin-left: 8px; }
.m2 { margin-left: 7px; }
.m3 { margin-left: 16px; }
.m4 { margin-left: 13px; }
.s3 { margin: 0 9px 0 13px; }
.vbtn { width: 24px; height: 23px; display: flex; align-items: center; justify-content: center; }
.vbtn.on { background: #bfdbf5; border: 1px solid #99c4ee; box-sizing: border-box; }

.panel { background: #fff; position: relative; display: flex; flex-direction: column; min-height: 0; overflow: hidden; }
.p-top { height: 29px; flex: none; display: flex; align-items: center; padding: 0 0 2px 90px; gap: 14px; box-sizing: border-box; }
.p-main { flex: 1; min-height: 0; display: flex; }
.p-body { width: 205px; flex: none; padding: 15px 0 0 16px; box-sizing: border-box; overflow: hidden; }
.p-head { display: flex; height: 55px; margin-bottom: 26px; }
.p-head svg { flex: none; }
.p-name { margin-left: 15px; display: flex; flex-direction: column; color: #444; }
.p-name b { font-size: 14px; line-height: 32px; color: #444; }
.p-name span { color: #aaa; font-size: 13.5px; line-height: 18px; }
.p-item { height: 53.5px; padding-left: 1px; }
.p-lab { font-size: 16px; line-height: 21.5px; padding-top: 1px; color: #888; white-space: nowrap; }
.p-val { font-size: 14px; line-height: 20.5px; color: #444; white-space: nowrap; }
.p-bar { width: 17px; flex: none; display: flex; flex-direction: column; }
.p-arr { height: 18px; flex: none; display: flex; align-items: center; justify-content: center; background: #f0eff2; }
.p-bar .p-arr:last-child { background: #fff; height: 22px; margin-top: auto; }
.p-thumb { height: 639px; background: #cdcdcd; flex: none; }
.volpill {
  position: absolute;
  left: 211px;
  top: 100px;
  width: 9px;
  height: 65px;
  border-radius: 5px;
  background: linear-gradient(#8d8d8d 0, #8d8d8d 33%, #14b46a 34%, #2fc46f 75%, #a5e8a0 100%);
  box-shadow: 0 1px 3px rgba(0, 0, 0, 0.3);
}

.status { height: 24px; flex: none; display: flex; align-items: center; background: #f0eff2; font-size: 13.5px; }
.st1 { width: 1303px; flex: none; padding-left: 256px; box-sizing: border-box; white-space: nowrap; font-size: 14px; }
.st2 { width: 1px; height: 24px; background: #e0e0e0; margin-right: 76px; flex: none; }
.st3 { width: 276px; flex: none; white-space: nowrap; border-left: 1px solid #e0e0e0; padding-left: 2px; box-sizing: border-box; line-height: 24px; }
.stb { width: 25.5px; height: 21px; background: #bfdbf5; border-left: 1px solid #99c4ee; display: flex; align-items: center; justify-content: center; box-sizing: border-box; flex: none; }

.taskbar { height: 45px; flex: none; background: #2b2b2b; display: flex; flex-direction: column; color: #ddd; }
.tb-row { height: 43px; display: flex; align-items: center; flex: none; }
.winlogo { margin-left: 17px; flex: none; }
.pin { flex: none; }
.e1 { margin-left: 30px; }
.e2 { margin-left: 20px; margin-top: -2px; }
.apps { display: flex; height: 43px; margin-left: 17px; flex: none; }
.app-slot { width: 83px; display: flex; align-items: center; padding-left: 3px; box-sizing: border-box; }
.app-slot.left .app-w { margin-left: -3px; margin-right: 3px; }
.app-w { position: relative; width: 26px; height: 26px; flex: none; }
.app-ic { flex: none; display: block; }
.gl { position: absolute; line-height: 1; }
.g-idea { left: 6px; top: 5px; font: 700 8px/1 "Liberation Mono", monospace; color: #fff; }
.g-typora { left: 7px; top: 5px; font: 15px/1 "Liberation Serif", serif; color: #666; }
.g-wps { left: 17px; top: 15px; font: 10px/1 "Liberation Sans", sans-serif; color: #dff7e6; }
.app-cur { width: 82px; margin-left: 5px; background: #666; display: flex; align-items: center; padding-left: 8px; box-sizing: border-box; flex: none; }
.app-l { margin-left: 4px; white-space: nowrap; font-size: 13.5px; color: #e4e4e4; }
.temp { width: 86px; margin-left: -3px; display: flex; flex-direction: column; align-items: center; line-height: 20px; flex: none; font-size: 13.5px; }
.tray { display: flex; align-items: center; flex: none; }
.y1 { margin-left: 4px; }
.y2 { margin-left: 14px; }
.y3 { margin-left: 10px; }
.y4 { margin-left: 8px; }
.y5 { margin-left: 8px; }
.y6 { margin-left: 12px; }
.y9 { margin-left: 2px; }
.y7 { margin-left: 12px; font-size: 14px; color: #bbb; }
.y8 { margin-left: 16px; }
.clock { width: 94px; display: flex; flex-direction: column; align-items: center; line-height: 21px; margin-left: 6px; flex: none; font-size: 13.5px; color: #ccc; }
.notif { margin-left: 7px; flex: none; }
.strip { height: 2px; display: flex; flex: none; background: #2b2b2b; }
.strip i { display: block; flex: none; height: 2px; }
.strip .a { background: #09a0d8; }
.strip .b { background: #8ec6ef; }
.strip .c { background: #a8d2f2; }
.photo {
  position: absolute;
  left: -24px;
  top: 926px;
  width: 44px;
  height: 44px;
  border-radius: 50%;
  background: #55604f;
  border: 2px solid #1a8be0;
  box-sizing: border-box;
}
.mark {
  position: absolute;
  left: 1485px;
  top: 933px;
  font-family: "Liberation Sans", sans-serif;
  font-size: 15.8px;
  line-height: 20px;
  color: rgba(205, 205, 205, 0.72);
  white-space: nowrap;
}
</style>

<style>
html, body { margin: 0; background: #000; overflow: hidden; }
</style>
